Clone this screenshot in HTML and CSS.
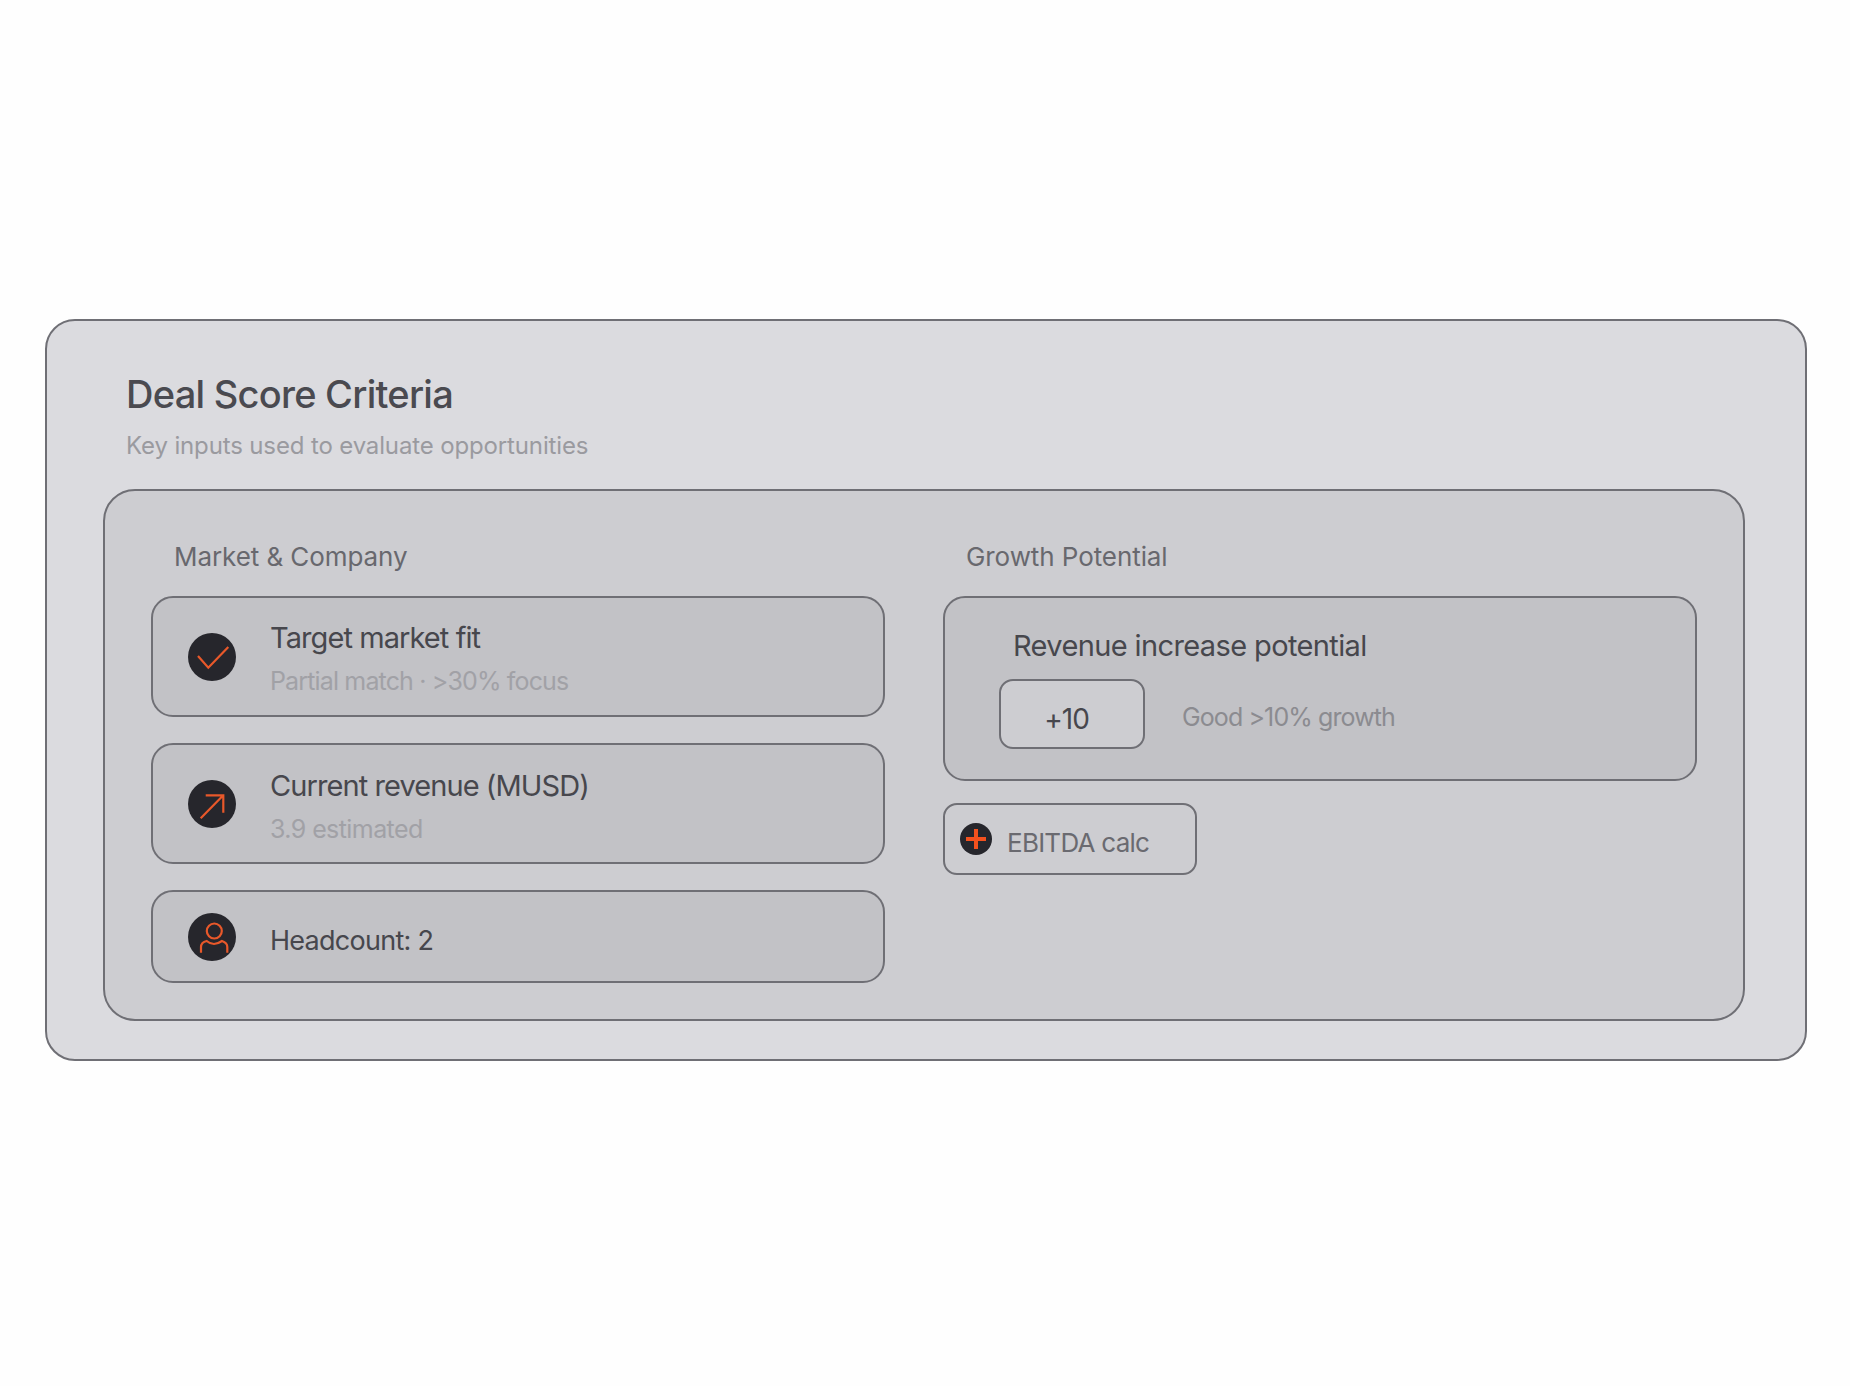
FILE: index.html
```html
<!DOCTYPE html>
<html lang="en">
<head>
<meta charset="utf-8">
<title>Deal Score Criteria</title>
<link rel="stylesheet" href="styles.css">
</head>
<body>
<main class="outer">
  <h1 class="title">Deal Score Criteria</h1>
  <p class="subtitle">Key inputs used to evaluate opportunities</p>
  <section class="panel">
    <div class="col">
      <h2 class="label label-left">Market &amp; Company</h2>
      <div class="stack">
        <div class="card">
          <span class="badge">
            <svg viewBox="0 0 48 48" class="glyph"><path d="M10 23 L20.3 34.7 L40.3 14"/></svg>
          </span>
          <div class="text">
            <div class="card-title">Target market fit</div>
            <div class="card-sub">Partial match · &gt;30% focus</div>
          </div>
        </div>
        <div class="card">
          <span class="badge">
            <svg viewBox="0 0 48 48" class="glyph"><path d="M12.7 38.3 L35.3 15.3 M17.7 15.3 H35.3 V32.7"/></svg>
          </span>
          <div class="text text-low">
            <div class="card-title">Current revenue (MUSD)</div>
            <div class="card-sub card-sub-wide">3.9 estimated</div>
          </div>
        </div>
        <div class="card card-short">
          <span class="badge">
            <svg viewBox="0 0 48 48" class="glyph"><circle cx="26.3" cy="18" r="7.5"/><path d="M13 39.7 V34 C13 31 15.5 28.8 18.7 28 C21 30 24 31 26 31 C28 31 31 30 34 28 C37 29 39.3 31 39.3 34 V39.7"/></svg>
          </span>
          <div class="text text-short">
            <div class="card-title card-title-small">Headcount: 2</div>
          </div>
        </div>
      </div>
    </div>
    <div class="col">
      <h2 class="label label-right">Growth Potential</h2>
      <div class="stack stack-right">
        <div class="growth">
          <div class="card-title growth-title">Revenue increase potential</div>
          <div class="growth-row">
            <span class="pill">+10</span>
            <span class="growth-note">Good &gt;10% growth</span>
          </div>
        </div>
        <div class="ebitda">
          <span class="badge badge-small">
            <svg viewBox="0 0 32 32" class="plus"><path d="M6 16 H26 M16 6 V26"/></svg>
          </span>
          <span class="ebitda-text">EBITDA calc</span>
        </div>
      </div>
    </div>
  </section>
</main>
</body>
</html>
```
FILE: styles.css
```css
* { box-sizing: border-box; }

html, body { margin: 0; padding: 0; }

body {
  height: 1386px;
  background: #fefefe;
  padding: 319px 0 0 45px;
  font-family: Inter, "Liberation Sans", Arial, sans-serif;
  overflow: hidden;
}

.outer {
  width: 1762px;
  height: 742px;
  background: #dbdbdf;
  border: 2px solid #6f6f75;
  border-radius: 30px;
  padding: 50px 60px 0 56px;
}

.title {
  margin: 0 0 0 23px;
  font-size: 38px;
  line-height: 46px;
  font-weight: 500;
  letter-spacing: -0.74px;
  color: #4a4a50;
}

.subtitle {
  margin: 14px 0 28px 23px;
  font-size: 24px;
  line-height: 30px;
  letter-spacing: -0.14px;
  color: #9a9a9f;
}

.panel {
  display: grid;
  grid-template-columns: 734px 754px;
  column-gap: 58px;
  height: 532px;
  background: #cdcdd1;
  border: 2px solid #6f6f75;
  border-radius: 32px;
  padding: 50px 45px 0 46px;
}

.label {
  margin: 0 0 23px;
  font-size: 26px;
  line-height: 32px;
  font-weight: 400;
  letter-spacing: -0.08px;
  color: #68686e;
}

.label-left { padding-left: 23px; }
.label-right { padding-left: 23px; }

.stack {
  display: flex;
  flex-direction: column;
  gap: 26px;
}

.stack-right {
  gap: 22px;
  align-items: flex-start;
}

.card {
  display: flex;
  align-items: center;
  gap: 34px;
  height: 121px;
  background: #c2c2c6;
  border: 2px solid #6f6f75;
  border-radius: 22px;
  padding-left: 35px;
}

.card-short { height: 93px; }

.badge {
  display: block;
  flex: none;
  width: 48px;
  height: 48px;
  border-radius: 50%;
  background: #26262c;
}

.badge-small {
  width: 32px;
  height: 32px;
}

.glyph {
  display: block;
  width: 48px;
  height: 48px;
  fill: none;
  stroke: #e8582a;
  stroke-width: 2.2;
}

.plus {
  display: block;
  width: 32px;
  height: 32px;
  fill: none;
  stroke: #f4511e;
  stroke-width: 4;
}

.text { padding-top: 4px; }
.text-low { padding-top: 6px; }
.text-short { padding-top: 9px; }

.card-title {
  font-size: 29px;
  line-height: 36px;
  letter-spacing: -0.92px;
  color: #47474d;
}

.card-title-small {
  font-size: 27px;
  letter-spacing: -0.73px;
}

.growth-title { letter-spacing: -0.62px; }

.card-sub {
  margin-top: 9px;
  font-size: 25px;
  line-height: 32px;
  letter-spacing: -0.85px;
  color: #a1a1a6;
}

.card-sub-wide { letter-spacing: -0.58px; }

.growth {
  width: 754px;
  height: 185px;
  background: #c2c2c6;
  border: 2px solid #6f6f75;
  border-radius: 22px;
  padding: 30px 0 0 68px;
}

.growth-row {
  display: flex;
  align-items: center;
  gap: 37px;
  margin: 15px 0 0 -14px;
}

.pill {
  display: block;
  width: 146px;
  height: 70px;
  background: #cdcdd1;
  border: 2px solid #6f6f75;
  border-radius: 14px;
  padding: 20px 11px 0 0;
  text-align: center;
  font-size: 28px;
  line-height: 36px;
  letter-spacing: -0.95px;
  color: #47474d;
}

.growth-note {
  padding-top: 6px;
  font-size: 25px;
  line-height: 32px;
  letter-spacing: -0.9px;
  color: #8b8b90;
}

.ebitda {
  display: flex;
  align-items: center;
  gap: 15px;
  width: 254px;
  height: 72px;
  border: 2px solid #6f6f75;
  border-radius: 14px;
  padding-left: 15px;
}

.ebitda-text {
  padding-top: 7px;
  font-size: 26px;
  line-height: 32px;
  letter-spacing: -0.75px;
  color: #6a6a70;
}
```
